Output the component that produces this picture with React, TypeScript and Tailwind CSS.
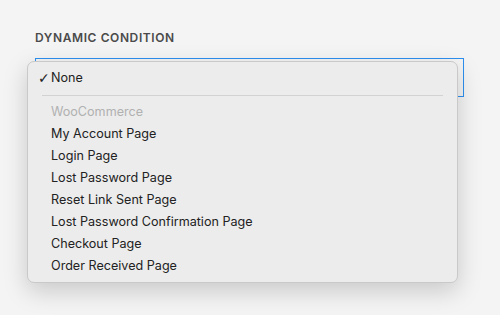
import React from "react";

const items = [
  "My Account Page",
  "Login Page",
  "Lost Password Page",
  "Reset Link Sent Page",
  "Lost Password Confirmation Page",
  "Checkout Page",
  "Order Received Page",
];

export default function App() {
  return (
    <div className="h-[315px] w-[500px] bg-[#f4f4f4] px-[35px] pt-[31px] font-['Inter',sans-serif]">
      <div className="text-[12px] font-semibold uppercase leading-[14px] tracking-[0.05em] text-[#4a4a4a]">
        Dynamic Condition
      </div>
      <div className="relative mt-[13px] h-[39px] w-[429px] border border-[#2d8ff0]">
        {/* popup menu over the select */}
        <div className="absolute left-[-9px] top-[2px] w-[431px] rounded-[7px] border border-[#c9c9c9] bg-[#ececec] py-[5px] text-[12.6px] text-[#222] shadow-[0_8px_24px_rgba(0,0,0,0.18)]">
          <div className="flex h-[22px] items-center pl-[10px]">
            <span className="w-[13px] font-['DejaVu_Sans',sans-serif] text-[14px] font-bold leading-none">✓</span>
            <span>None</span>
          </div>
          <div className="flex h-[12px] items-center px-[14px]">
            <div className="h-px w-full bg-[#d2d2d2]" />
          </div>
          <div className="flex h-[22px] items-center pl-[23px] text-[#b1b1b1]">WooCommerce</div>
          {items.map((label) => (
            <div key={label} className="flex h-[22px] items-center pl-[23px]">
              {label}
            </div>
          ))}
        </div>
      </div>
    </div>
  );
}
